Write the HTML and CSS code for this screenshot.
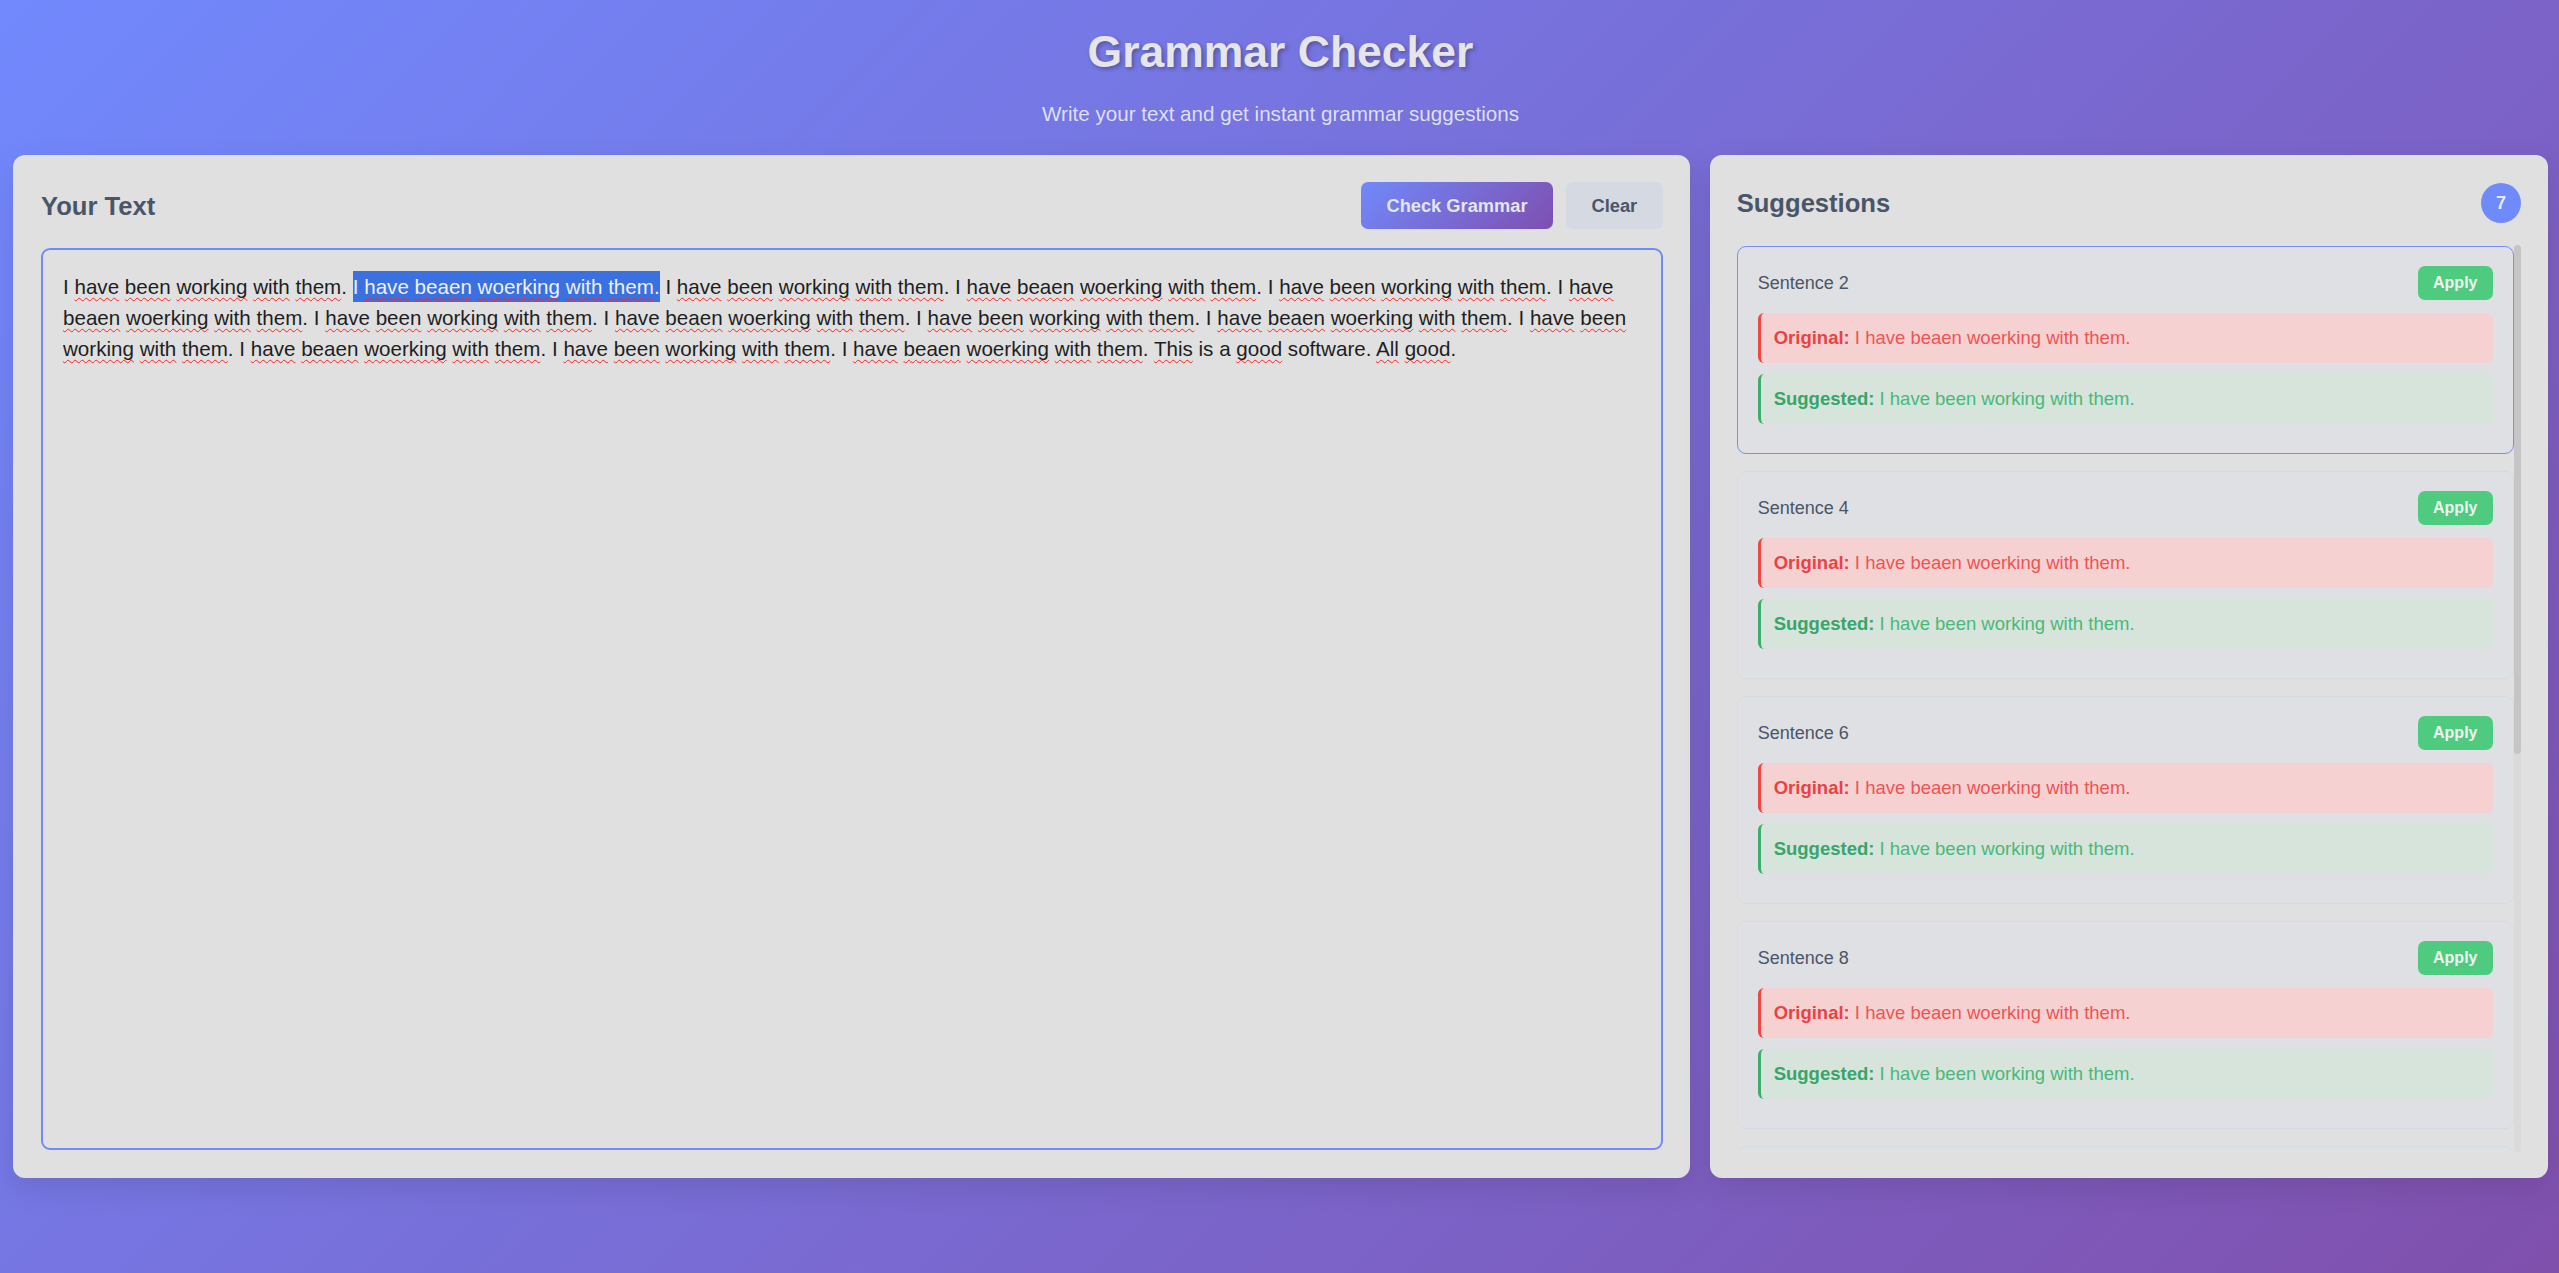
FILE: index.html
```html
<!DOCTYPE html>
<html lang="en">
<head>
<meta charset="utf-8">
<title>Grammar Checker</title>
<link rel="stylesheet" href="styles.css">
</head>
<body>
<div class="app">
  <header class="header">
    <h1 class="title">Grammar Checker</h1>
    <p class="subtitle">Write your text and get instant grammar suggestions</p>
  </header>
  <main class="main">
    <section class="panel editor">
      <div class="panel-head editor-head">
        <h2 class="panel-title">Your Text</h2>
        <div class="actions">
          <button class="btn btn-primary">Check Grammar</button>
          <button class="btn btn-secondary">Clear</button>
        </div>
      </div>
      <div class="text-input">I <span class="sp">have</span> <span class="sp">been</span> <span class="sp">working</span> <span class="sp">with</span> <span class="sp">them</span>. <span class="sel">I <span class="sp">have</span> <span class="sp">beaen</span> <span class="sp">woerking</span> <span class="sp">with</span> <span class="sp">them</span>.</span> I <span class="sp">have</span> <span class="sp">been</span> <span class="sp">working</span> <span class="sp">with</span> <span class="sp">them</span>. I <span class="sp">have</span> <span class="sp">beaen</span> <span class="sp">woerking</span> <span class="sp">with</span> <span class="sp">them</span>. I <span class="sp">have</span> <span class="sp">been</span> <span class="sp">working</span> <span class="sp">with</span> <span class="sp">them</span>. I <span class="sp">have</span> <span class="sp">beaen</span> <span class="sp">woerking</span> <span class="sp">with</span> <span class="sp">them</span>. I <span class="sp">have</span> <span class="sp">been</span> <span class="sp">working</span> <span class="sp">with</span> <span class="sp">them</span>. I <span class="sp">have</span> <span class="sp">beaen</span> <span class="sp">woerking</span> <span class="sp">with</span> <span class="sp">them</span>. I <span class="sp">have</span> <span class="sp">been</span> <span class="sp">working</span> <span class="sp">with</span> <span class="sp">them</span>. I <span class="sp">have</span> <span class="sp">beaen</span> <span class="sp">woerking</span> <span class="sp">with</span> <span class="sp">them</span>. I <span class="sp">have</span> <span class="sp">been</span> <span class="sp">working</span> <span class="sp">with</span> <span class="sp">them</span>. I <span class="sp">have</span> <span class="sp">beaen</span> <span class="sp">woerking</span> <span class="sp">with</span> <span class="sp">them</span>. I <span class="sp">have</span> <span class="sp">been</span> <span class="sp">working</span> <span class="sp">with</span> <span class="sp">them</span>. I <span class="sp">have</span> <span class="sp">beaen</span> <span class="sp">woerking</span> <span class="sp">with</span> <span class="sp">them</span>. <span class="sp">This</span> is a <span class="sp">good</span> software. <span class="sp">All</span> <span class="sp">good</span>.</div>
    </section>
    <aside class="panel suggestions">
      <div class="panel-head sugg-head">
        <h2 class="panel-title">Suggestions</h2>
        <span class="badge">7</span>
      </div>
      <div class="sugg-body">
        <div class="sugg-list">
          <div class="card active">
            <div class="card-head"><span class="card-label">Sentence 2</span><button class="btn-apply">Apply</button></div>
            <div class="box orig"><b>Original:</b> I have beaen woerking with them.</div>
            <div class="box sugg"><b>Suggested:</b> I have been working with them.</div>
          </div>
          <div class="card">
            <div class="card-head"><span class="card-label">Sentence 4</span><button class="btn-apply">Apply</button></div>
            <div class="box orig"><b>Original:</b> I have beaen woerking with them.</div>
            <div class="box sugg"><b>Suggested:</b> I have been working with them.</div>
          </div>
          <div class="card">
            <div class="card-head"><span class="card-label">Sentence 6</span><button class="btn-apply">Apply</button></div>
            <div class="box orig"><b>Original:</b> I have beaen woerking with them.</div>
            <div class="box sugg"><b>Suggested:</b> I have been working with them.</div>
          </div>
          <div class="card">
            <div class="card-head"><span class="card-label">Sentence 8</span><button class="btn-apply">Apply</button></div>
            <div class="box orig"><b>Original:</b> I have beaen woerking with them.</div>
            <div class="box sugg"><b>Suggested:</b> I have been working with them.</div>
          </div>
          <div class="card">
            <div class="card-head"><span class="card-label">Sentence 10</span><button class="btn-apply">Apply</button></div>
            <div class="box orig"><b>Original:</b> I have beaen woerking with them.</div>
            <div class="box sugg"><b>Suggested:</b> I have been working with them.</div>
          </div>
          <div class="card">
            <div class="card-head"><span class="card-label">Sentence 12</span><button class="btn-apply">Apply</button></div>
            <div class="box orig"><b>Original:</b> I have beaen woerking with them.</div>
            <div class="box sugg"><b>Suggested:</b> I have been working with them.</div>
          </div>
          <div class="card">
            <div class="card-head"><span class="card-label">Sentence 14</span><button class="btn-apply">Apply</button></div>
            <div class="box orig"><b>Original:</b> I have beaen woerking with them.</div>
            <div class="box sugg"><b>Suggested:</b> I have been working with them.</div>
          </div>
        </div>
        <div class="scrollbar"><div class="scroll-thumb"></div></div>
      </div>
    </aside>
  </main>
</div>
</body>
</html>
```
FILE: styles.css
```css
* { box-sizing: border-box; }
html, body { margin: 0; }
body {
  min-height: 100vh;
  font-family: "Liberation Sans", Arial, sans-serif;
  color: #222;
  background: linear-gradient(135deg, #7189fd 0%, #8050ad 100%);
}
.app {
  padding: 26px 11px 0 13px;
}
.header {
  text-align: center;
  margin-bottom: 29px;
}
.title {
  margin: 0 0 25px;
  font-size: 44.5px;
  line-height: 51px;
  font-weight: 700;
  color: #e5e5ea;
  text-shadow: 2px 2px 4px rgba(0, 0, 0, 0.3);
}
.subtitle {
  margin: 0;
  font-size: 20.6px;
  line-height: 24px;
  color: #dedff2;
}
.main {
  display: grid;
  grid-template-columns: 2fr 1fr;
  gap: 20px;
  height: 1023px;
}
.panel {
  background: #e0e0e0;
  border-radius: 12px;
  box-shadow: 0 10px 30px rgba(0, 0, 0, 0.1);
  display: flex;
  flex-direction: column;
  min-height: 0;
}
.editor { padding: 27px 27px 28px 28px; }
.suggestions { padding: 27px 27px 26px 27px; }
.panel-head {
  display: flex;
  align-items: center;
  justify-content: space-between;
}
.editor-head { height: 47px; margin-bottom: 19px; }
.sugg-head { height: 42px; margin-bottom: 21px; }
.panel-title {
  margin: 0;
  font-size: 25.6px;
  line-height: 30px;
  font-weight: 700;
  color: #4a5568;
}
.actions { display: flex; gap: 13px; }
.btn {
  border: 0;
  border-radius: 7px;
  font-family: "Liberation Sans", Arial, sans-serif;
  font-weight: 700;
  font-size: 18.25px;
  line-height: 19px;
  padding: 14px 25.5px;
}
.btn-primary {
  background: linear-gradient(135deg, #7189fa 0%, #7e4fb0 100%);
  color: #e4e5f2;
}
.btn-secondary {
  background: #d5d9e1;
  color: #4a5568;
}
.text-input {
  flex: 1;
  min-height: 0;
  border: 2px solid #7089fb;
  border-radius: 9px;
  padding: 21px 20px;
  font-size: 20.6px;
  line-height: 31px;
  color: #1e1e22;
  background: #e0e0e0;
  overflow: hidden;
}
.sp {
  text-decoration-line: underline;
  text-decoration-style: wavy;
  text-decoration-color: #f22;
  text-decoration-thickness: 1px;
  text-underline-offset: 3px;
  text-decoration-skip-ink: none;
}
.sel {
  background: #3b70e0;
  color: #eef1fb;
  padding: 4px 0;
}
.badge {
  width: 40px;
  height: 40px;
  border-radius: 50%;
  background: #6f8bfb;
  color: #e8eaf5;
  font-weight: 700;
  font-size: 18px;
  display: flex;
  align-items: center;
  justify-content: center;
}
.sugg-body {
  flex: 1;
  min-height: 0;
  display: flex;
}
.sugg-list {
  flex: 1;
  min-width: 0;
  overflow: hidden;
  display: flex;
  flex-direction: column;
  gap: 17px;
  padding-top: 1px;
}
.scrollbar {
  flex: none;
  width: 7px;
  background: #dadada;
  border-radius: 4px;
}
.scroll-thumb {
  height: 509px;
  background: #c5c5c5;
  border-radius: 4px;
}
.card {
  flex: none;
  background: #dfe0e3;
  border: 1px solid #d6dae3;
  border-radius: 9px;
  padding: 19px 20px 29px;
}
.card.active { border-color: #7a8df6; }
.card-head {
  display: flex;
  align-items: center;
  justify-content: space-between;
  margin-bottom: 13px;
}
.card-label {
  font-size: 18px;
  line-height: 22px;
  color: #4a5568;
}
.btn-apply {
  border: 0;
  border-radius: 7px;
  background: #4fcb80;
  color: #eef3ef;
  font-family: "Liberation Sans", Arial, sans-serif;
  font-weight: 700;
  font-size: 16px;
  line-height: 18px;
  padding: 8px 15.5px;
}
.box {
  border-left: 3px solid;
  border-radius: 6px;
  padding: 14px 13px;
  font-size: 18.5px;
  line-height: 22px;
}
.box + .box { margin-top: 11px; }
.orig {
  background: #f5d1d1;
  border-left-color: #f04646;
  color: #ef5454;
}
.orig b { color: #e84343; }
.sugg {
  background: #d6e4db;
  border-left-color: #3cae6c;
  color: #48b97a;
}
.sugg b { color: #38a56a; }
```
